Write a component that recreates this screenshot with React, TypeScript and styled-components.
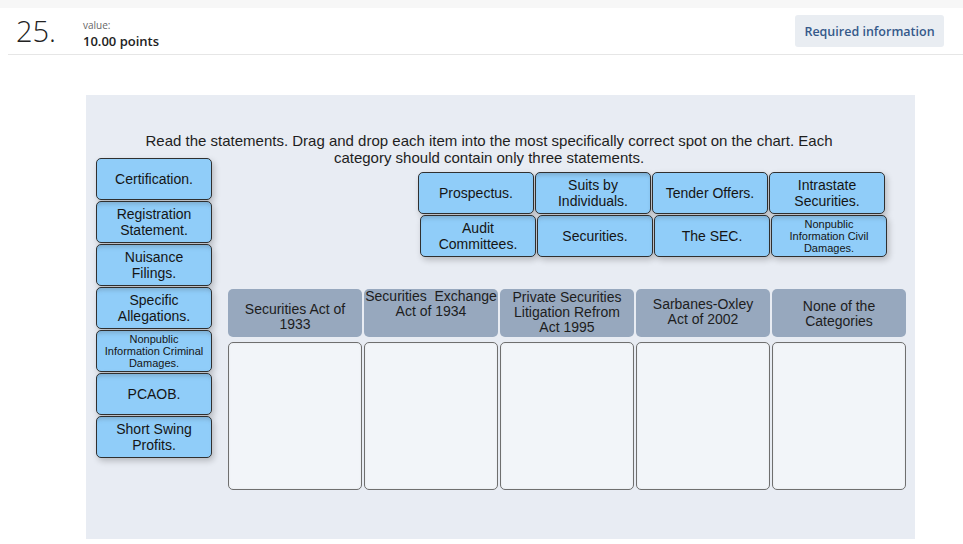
import React from "react";
import styled, { createGlobalStyle } from "styled-components";

const GlobalStyle = createGlobalStyle`
  body {
    margin: 0;
    background: #ffffff;
    font-family: "Liberation Sans", Arial, sans-serif;
    color: #222;
  }
`;

const leftItems = [
  "Certification.",
  "Registration\nStatement.",
  "Nuisance\nFilings.",
  "Specific\nAllegations.",
  "Nonpublic\nInformation Criminal\nDamages.",
  "PCAOB.",
  "Short Swing\nProfits.",
];

const topRows = [
  ["Prospectus.", "Suits by\nIndividuals.", "Tender Offers.", "Intrastate\nSecurities."],
  ["Audit\nCommittees.", "Securities.", "The SEC.", "Nonpublic\nInformation Civil\nDamages."],
];

// nudge = vertical offset of the label inside its header, as in the original
const categories = [
  { label: "Securities Act of\n1933", top: false, nudge: 8 },
  { label: "Securities\u00a0 Exchange\nAct of 1934", top: true, nudge: 0 },
  { label: "Private Securities\nLitigation Refrom\nAct 1995", top: false, nudge: -2 },
  { label: "Sarbanes-Oxley\nAct of 2002", top: false, nudge: -2 },
  { label: "None of the\nCategories", top: false, nudge: 2 },
];

const isSmall = (text: string) => text.startsWith("Nonpublic");

export default function App() {
  return (
    <>
      <GlobalStyle />
      <TopStrip />
      <Header>
        <QuestionNumber>25.</QuestionNumber>
        <ValueBlock>
          <ValueLabel>value:</ValueLabel>
          <Points>10.00 points</Points>
        </ValueBlock>
        <InfoButton>Required information</InfoButton>
      </Header>
      <Panel>
        <Instructions>
          Read the statements. Drag and drop each item into the most specifically correct spot on the
          chart. Each
          <br />
          category should contain only three statements.
        </Instructions>
        <Board>
          <LeftColumn>
            {leftItems.map((item, idx) => (
              <Card key={item} $small={isSmall(item)} $shaded={idx > 0}>
                {item}
              </Card>
            ))}
          </LeftColumn>
          <RightArea>
            <TopCards>
              {topRows.map((row, rowIdx) => (
                <CardRow key={rowIdx} $shift={rowIdx === 1}>
                  {row.map((item, idx) => (
                    <Card
                      key={item}
                      $small={isSmall(item)}
                      $shaded={rowIdx === 1 || idx === 1}
                    >
                      {item}
                    </Card>
                  ))}
                </CardRow>
              ))}
            </TopCards>
            <Categories>
              {categories.map((cat) => (
                <CategoryHeader key={cat.label} $top={cat.top} $nudge={cat.nudge}>
                  {cat.label}
                </CategoryHeader>
              ))}
              {categories.map((cat) => (
                <DropZone key={`${cat.label}-zone`} />
              ))}
            </Categories>
          </RightArea>
        </Board>
      </Panel>
    </>
  );
}

const TopStrip = styled.div`
  height: 8px;
  background: #f7f7f7;
`;

const Header = styled.div`
  display: flex;
  align-items: center;
  height: 46px;
  margin-left: 8px;
  padding: 0 19px 0 8px;
  border-bottom: 1px solid #e6e6e6;
  font-family: "Open Sans", "Liberation Sans", sans-serif;
`;

const QuestionNumber = styled.div`
  font-size: 29px;
  font-weight: 300;
  color: #222;
  width: 67px;
  margin-top: -2px;
`;

const ValueBlock = styled.div`
  display: flex;
  flex-direction: column;
  gap: 1px;
  flex: 1;
  margin-top: 6px;
`;

const ValueLabel = styled.div`
  font-size: 10px;
  line-height: 14px;
  color: #666;
`;

const Points = styled.div`
  font-size: 13px;
  line-height: 17px;
  font-weight: 600;
  color: #222;
`;

const InfoButton = styled.div`
  width: 149px;
  height: 32px;
  display: flex;
  align-items: center;
  justify-content: center;
  border-radius: 3px;
  background: #e9edf2;
  color: #35598a;
  font-size: 12.5px;
  font-weight: 600;
`;

const Panel = styled.div`
  width: 829px;
  height: 444px;
  margin: 40px 0 0 86px;
  padding: 37px 29px 0 10px;
  box-sizing: border-box;
  background: #e8ecf3;
  overflow: hidden;
`;

const Instructions = styled.div`
  margin: 0 auto;
  padding-right: 4px;
  text-align: center;
  font-size: 15px;
  line-height: 17px;
  color: #1e1e1e;
  white-space: nowrap;
`;

const Board = styled.div`
  display: flex;
  margin-top: -8px;
`;

const LeftColumn = styled.div`
  display: flex;
  flex-direction: column;
  gap: 1px;
  width: 116px;
`;

const RightArea = styled.div`
  display: flex;
  flex-direction: column;
  margin-left: 16px;
`;

const TopCards = styled.div`
  display: flex;
  flex-direction: column;
  gap: 1px;
  margin: 14px 0 0 190px;
`;

const CardRow = styled.div<{ $shift?: boolean }>`
  display: flex;
  gap: 1px;
  padding-left: ${({ $shift }) => ($shift ? "2px" : "0")};
`;

const Card = styled.div<{ $small?: boolean; $shaded?: boolean }>`
  width: 116px;
  height: 42px;
  box-sizing: border-box;
  display: flex;
  align-items: center;
  justify-content: center;
  padding: 0 2px;
  text-align: center;
  white-space: pre-line;
  border: 1px solid #303030;
  border-radius: 5px;
  background: #90cdf9;
  box-shadow: ${({ $shaded }) =>
    $shaded
      ? "inset 0 5px 4px -3px rgba(90, 110, 130, 0.35), 2px 3px 6px rgba(0, 0, 0, 0.22)"
      : "2px 3px 6px rgba(0, 0, 0, 0.22)"};
  color: #151515;
  font-size: ${({ $small }) => ($small ? "11px" : "14px")};
  line-height: ${({ $small }) => ($small ? "12px" : "16px")};
`;

const Categories = styled.div`
  display: grid;
  grid-template-columns: repeat(5, 134px);
  grid-template-rows: 48px 148px;
  column-gap: 2px;
  row-gap: 5px;
  margin-top: 32px;
`;

const CategoryHeader = styled.div<{ $top?: boolean; $nudge: number }>`
  display: flex;
  align-items: ${({ $top }) => ($top ? "flex-start" : "center")};
  justify-content: center;
  padding-top: ${({ $nudge }) => ($nudge > 0 ? `${$nudge}px` : "0")};
  padding-bottom: ${({ $nudge }) => ($nudge < 0 ? `${-$nudge}px` : "0")};
  text-align: center;
  white-space: pre;
  background: #97a8be;
  border-radius: 5px;
  color: #1d1d1d;
  font-size: 14px;
  line-height: 15px;
`;

const DropZone = styled.div`
  box-sizing: border-box;
  background: #f2f5f9;
  border: 1px solid #6f6f6f;
  border-radius: 5px;
  box-shadow: inset 0 0 2px rgba(0, 0, 0, 0.08);
`;
